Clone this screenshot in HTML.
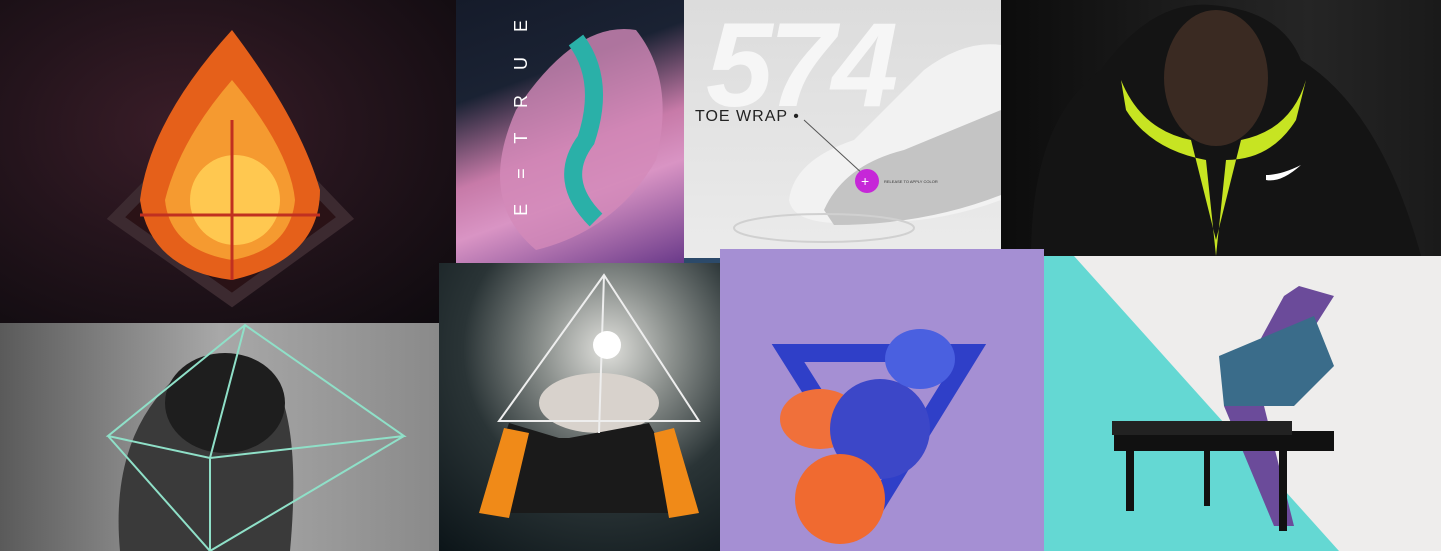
<!DOCTYPE html>
<html><head><meta charset="utf-8"><style>
*{margin:0;padding:0;box-sizing:border-box}
body{width:1441px;height:551px;overflow:hidden;background:#fff;position:relative;font-family:"Liberation Sans",sans-serif}
.t{position:absolute;overflow:hidden}
svg{position:absolute;left:0;top:0}
</style></head><body>
<div class="t" style="left:0;top:0;width:456px;height:323px;background:radial-gradient(ellipse at 40% 40%,#3a1d28 0%,#24141c 45%,#0d0a0e 100%)">
<svg width="456" height="323">
<polygon points="232,100 345,218 232,300 116,218" fill="#2a1216" stroke="#3c2a30" stroke-width="12"/>
<path d="M232 30 Q300 120 320 190 Q320 260 232 280 Q150 270 140 200 Q150 120 232 30Z" fill="#e5601a"/>
<path d="M232 80 Q290 150 295 200 Q290 250 232 260 Q170 250 165 200 Q180 140 232 80Z" fill="#f59a30"/>
<ellipse cx="235" cy="200" rx="45" ry="45" fill="#ffc850"/>
<path d="M232 120 V280 M140 215 H320" stroke="#c03020" stroke-width="3"/>
</svg></div>
<div class="t" style="left:456px;top:0;width:228px;height:263px;background:linear-gradient(160deg,#151b2a 0%,#1a2233 30%,#c77aa8 55%,#d994c4 70%,#6a3a8a 100%)">
<svg width="228" height="263"><path d="M60 110 Q120 20 180 30 Q220 80 200 160 Q160 230 80 250 Q20 200 60 110Z" fill="#d38ab9" opacity=".8"/><path d="M120 40 Q150 80 130 140 Q100 180 140 220" stroke="#2ab0a8" stroke-width="18" fill="none"/></svg>
<div style="position:absolute;left:55px;top:10px;color:#fff;font-size:18px;writing-mode:vertical-rl;transform:rotate(180deg);letter-spacing:10px">E = T R U E</div>
</div>
<div class="t" style="left:684px;top:258px;width:36px;height:6px;background:#2c4a6a"></div>
<div class="t" style="left:684px;top:0;width:317px;height:258px;background:linear-gradient(180deg,#dcdcdc,#ebebeb)">
<div style="position:absolute;left:22px;top:-4px;font-size:120px;font-weight:bold;font-style:italic;color:#f6f6f6;letter-spacing:-4px">574</div>
<div style="position:absolute;left:11px;top:108px;font-size:16px;color:#222;letter-spacing:1px">TOE WRAP •</div>
<svg width="317" height="258">
<path d="M105 200 Q110 160 170 140 L240 70 Q280 40 317 45 L317 200 Q250 225 180 222 Q110 228 105 200Z" fill="#f2f2f2"/>
<path d="M140 210 Q160 165 220 150 L317 110 L317 195 Q240 225 150 225Z" fill="#c4c4c4"/>
<path d="M120 120 L180 175" stroke="#555" stroke-width="1"/>
<ellipse cx="140" cy="228" rx="90" ry="14" fill="none" stroke="#d0d0d0" stroke-width="2"/>
<circle cx="183" cy="181" r="12" fill="#c627d8"/><text x="177" y="186" fill="#fff" font-size="14">+</text>
<text x="200" y="183" fill="#333" font-size="4">RELEASE TO APPLY COLOR</text></svg>
</div>
<div class="t" style="left:1001px;top:0;width:440px;height:256px;background:linear-gradient(90deg,#0c0c0c,#1c1c1c 40%,#252525 70%,#1a1a1a)">
<svg width="440" height="256"><path d="M30 256 Q30 120 100 70 Q150 0 210 5 Q280 10 300 60 Q380 110 420 256Z" fill="#141414"/>
<ellipse cx="215" cy="78" rx="52" ry="68" fill="#3a2a22"/>
<path d="M120 80 Q140 130 190 140 L215 240 L240 140 Q290 130 305 80 L295 120 Q270 160 225 160 L215 256 L205 160 Q150 150 125 110Z" fill="#c7e422"/>
<path d="M265 175 q15 0 35 -10 q-20 18 -35 15z" fill="#fff"/></svg></div>
<div class="t" style="left:0;top:323px;width:439px;height:228px;background:linear-gradient(90deg,#5a5a5a,#a8a8a8 50%,#8a8a8a)">
<svg width="439" height="228"><path d="M120 228 Q110 120 170 60 Q230 30 280 70 Q300 120 290 228Z" fill="#3a3a3a"/><ellipse cx="225" cy="80" rx="60" ry="50" fill="#1e1e1e"/>
<g stroke="#8fe0c8" stroke-width="2" fill="none"><path d="M245 2 L108 113 L210 135 L404 113 Z M245 2 L210 135 M108 113 L210 228 L404 113 M210 135 L210 228"/></g></svg></div>
<div class="t" style="left:439px;top:263px;width:281px;height:288px;background:radial-gradient(circle at 60% 30%,#e0e0dc 0%,#8a8f8c 25%,#2a3436 55%,#0b1418 100%)">
<svg width="281" height="288"><ellipse cx="160" cy="140" rx="60" ry="30" fill="#d8d2cc"/>
<path d="M40 250 L70 160 L120 175 L130 175 L210 160 L260 250Z" fill="#1a1a1a"/>
<path d="M40 250 L65 165 L90 170 L70 255Z M260 250 L235 165 L215 170 L230 255Z" fill="#f08a18"/>
<g stroke="#eee" stroke-width="2" fill="none"><path d="M165 12 L60 158 L260 158 Z M165 12 L160 170"/></g>
<circle cx="168" cy="82" r="14" fill="#fff"/></svg></div>
<div class="t" style="left:720px;top:249px;width:324px;height:302px;background:#a58fd3">
<svg width="324" height="302"><polygon points="68,104 250,104 160,250" fill="none" stroke="#2f3fc8" stroke-width="18"/>
<ellipse cx="100" cy="170" rx="40" ry="30" fill="#f0703a"/><ellipse cx="160" cy="180" rx="50" ry="50" fill="#3c47c8"/>
<ellipse cx="120" cy="250" rx="45" ry="45" fill="#f06a30"/><ellipse cx="200" cy="110" rx="35" ry="30" fill="#4a60e0"/></svg></div>
<div class="t" style="left:1044px;top:256px;width:397px;height:295px;background:#eeedec">
<svg width="397" height="295"><polygon points="0,0 30,0 295,295 0,295" fill="#64d8d3"/>
<path d="M180 150 L240 40 L255 30 L290 40 L220 150 L250 270 L230 270Z" fill="#6b4b9a"/>
<path d="M175 100 L270 60 L290 110 L250 150 L180 150Z" fill="#3a6c8a"/>
<path d="M70 175 L290 175 L290 195 L70 195Z" fill="#111"/><rect x="68" y="165" width="180" height="14" fill="#222"/>
<rect x="82" y="195" width="8" height="60" fill="#111"/><rect x="235" y="195" width="8" height="80" fill="#111"/><rect x="160" y="195" width="6" height="55" fill="#111"/></svg></div>
</body></html>
